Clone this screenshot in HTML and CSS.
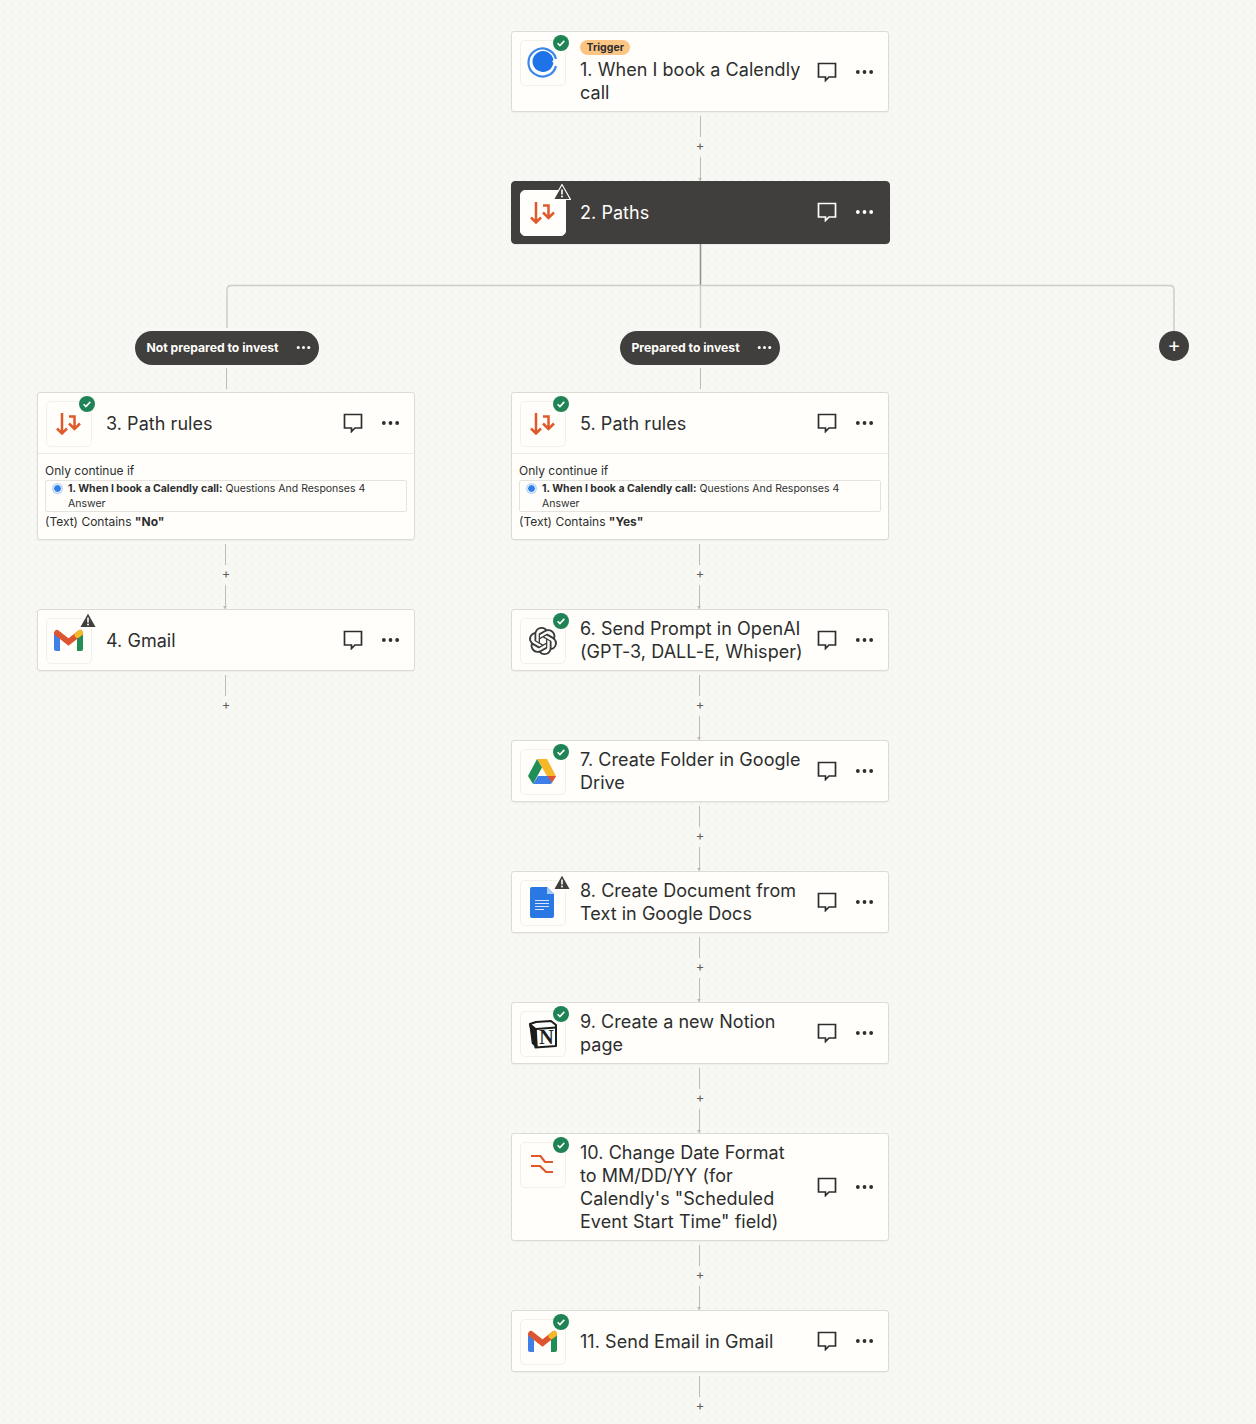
FILE: index.html
```html
<!DOCTYPE html>
<html lang="en">
<head>
    <meta charset="UTF-8">
    <title>Zap editor</title>
    <link rel="stylesheet" href="styles.css">
</head>
<body>

    <!-- Shared icons -->
    <svg class="defs" width="0" height="0">
        <symbol id="i-comment" viewBox="0 0 20 20">
            <path d="M1.500 1.500h17v13.500h-6.500l-3.500 3.500v-3.500h-7z" fill="none" stroke="currentColor" stroke-width="1.700"/>
        </symbol>
        <symbol id="i-more" viewBox="0 0 20 6">
            <circle cx="3" cy="3" r="2"/><circle cx="10" cy="3" r="2"/><circle cx="17" cy="3" r="2"/>
        </symbol>
        <symbol id="i-check" viewBox="0 0 16 16">
            <circle cx="8" cy="8" r="8" fill="#1f8355"/>
            <path d="M4.600 8.200l2.300 2.300 4.400-4.600" fill="none" stroke="#fff" stroke-width="1.600"/>
        </symbol>
        <symbol id="i-warn" viewBox="0 0 20 18">
            <path d="M10 1.500l8.500 15h-17z" fill="#403f3e" stroke="#fffefb" stroke-width="1.200" stroke-linejoin="round"/>
            <rect x="9.200" y="6.500" width="1.600" height="5" fill="#fff"/>
            <circle cx="10" cy="13.500" r="1" fill="#fff"/>
        </symbol>
        <symbol id="i-paths" viewBox="0 0 46 46">
            <path d="M16 12v20M11 27.500l5 5 5-5M23 15.500h5.500v12M23 22.500l5.500 5.500 5.500-5.500" fill="none" stroke="#e0592a" stroke-width="2.500"/>
        </symbol>
        <symbol id="i-gmail" viewBox="0 0 46 46">
            <path d="M8 16v15a2 2 0 0 0 2 2h4v-14z" fill="#3f7fe8"/>
            <path d="M31 33v-13l6-4v15a2 2 0 0 1-2 2z" fill="#1f8f55"/>
            <path d="M11 15l11.500 9 11.500-9" fill="none" stroke="#dc5530" stroke-width="6" stroke-linecap="round"/>
            <path d="M31.500 17l2.500-2" fill="none" stroke="#f6b92a" stroke-width="6" stroke-linecap="round"/>
        </symbol>
    </svg>

    <div class="canvas">

        <!-- Steps above the split -->
        <div class="trunk">
            <div class="card">
                <div class="card-head">
                    <div class="app-icon">
                        <svg viewBox="0 0 46 46">
                            <path d="M36 18.900A14 14 0 1 0 36 26.100" fill="none" stroke="#3b87ea" stroke-width="2.200"/>
                            <path d="M33.400 20.200A10.500 10.500 0 1 0 33.400 22.800L32 21.500z" fill="#1e73e8"/>
                        </svg>
                        <svg class="status"><use href="#i-check"/></svg>
                    </div>
                    <div class="card-text">
                        <span class="tag">Trigger</span>
                        <div class="card-title">1. When I book a Calendly call</div>
                    </div>
                    <div class="card-actions">
                        <svg class="act-comment"><use href="#i-comment"/></svg>
                        <svg class="act-more"><use href="#i-more"/></svg>
                    </div>
                </div>
            </div>

            <div class="link"><i class="line"></i><span class="plus">+</span><i class="line tip"></i></div>

            <div class="card card-dark">
                <div class="card-head">
                    <div class="app-icon">
                        <svg viewBox="0 0 46 46"><use href="#i-paths"/></svg>
                        <svg class="status warn"><use href="#i-warn"/></svg>
                    </div>
                    <div class="card-text">
                        <div class="card-title">2. Paths</div>
                    </div>
                    <div class="card-actions">
                        <svg class="act-comment"><use href="#i-comment"/></svg>
                        <svg class="act-more"><use href="#i-more"/></svg>
                    </div>
                </div>
            </div>
        </div>

        <!-- Split lines -->
        <div class="branches">
            <svg class="branch-lines" width="1256" height="90">
                <path d="M700.500 0v41" stroke="#8f8e8a" stroke-width="1.500" fill="none"/>
                <path d="M227 84v-38q0-4.500 4.500-4.500h938q4.500 0 4.500 4.500v41M700.500 41v43" stroke="#cfcdc7" stroke-width="1.500" fill="none"/>
            </svg>

            <!-- Left path -->
            <div class="branch">
                <div class="path-pill path-pill-left"><span>Not prepared to invest</span><svg class="pill-more"><use href="#i-more"/></svg></div>
                <i class="stub"></i>

                <div class="card">
                    <div class="card-head">
                        <div class="app-icon">
                            <svg viewBox="0 0 46 46"><use href="#i-paths"/></svg>
                            <svg class="status"><use href="#i-check"/></svg>
                        </div>
                        <div class="card-text"><div class="card-title">3. Path rules</div></div>
                        <div class="card-actions">
                            <svg class="act-comment"><use href="#i-comment"/></svg>
                            <svg class="act-more"><use href="#i-more"/></svg>
                        </div>
                    </div>
                    <div class="rule">
                        <div>Only continue if</div>
                        <div class="rule-field">
                            <i class="rule-dot"></i>
                            <div><b>1. When I book a Calendly call:</b> <span>Questions And Responses 4</span> <span>Answer</span></div>
                        </div>
                        <div>(Text) Contains <b>"No"</b></div>
                    </div>
                </div>

                <div class="link"><i class="line"></i><span class="plus">+</span><i class="line tip"></i></div>

                <div class="card">
                    <div class="card-head">
                        <div class="app-icon">
                            <svg viewBox="0 0 46 46"><use href="#i-gmail"/></svg>
                            <svg class="status warn"><use href="#i-warn"/></svg>
                        </div>
                        <div class="card-text"><div class="card-title">4. Gmail</div></div>
                        <div class="card-actions">
                            <svg class="act-comment"><use href="#i-comment"/></svg>
                            <svg class="act-more"><use href="#i-more"/></svg>
                        </div>
                    </div>
                </div>

                <div class="link"><i class="line"></i><span class="plus">+</span></div>
            </div>

            <!-- Middle path -->
            <div class="branch">
                <div class="path-pill"><span>Prepared to invest</span><svg class="pill-more"><use href="#i-more"/></svg></div>
                <i class="stub"></i>

                <div class="card">
                    <div class="card-head">
                        <div class="app-icon">
                            <svg viewBox="0 0 46 46"><use href="#i-paths"/></svg>
                            <svg class="status"><use href="#i-check"/></svg>
                        </div>
                        <div class="card-text"><div class="card-title">5. Path rules</div></div>
                        <div class="card-actions">
                            <svg class="act-comment"><use href="#i-comment"/></svg>
                            <svg class="act-more"><use href="#i-more"/></svg>
                        </div>
                    </div>
                    <div class="rule">
                        <div>Only continue if</div>
                        <div class="rule-field">
                            <i class="rule-dot"></i>
                            <div><b>1. When I book a Calendly call:</b> <span>Questions And Responses 4</span> <span>Answer</span></div>
                        </div>
                        <div>(Text) Contains <b>"Yes"</b></div>
                    </div>
                </div>

                <div class="link"><i class="line"></i><span class="plus">+</span><i class="line tip"></i></div>

                <div class="card">
                    <div class="card-head">
                        <div class="app-icon">
                            <svg viewBox="0 0 24 24" class="openai">
                                <path fill="#3a3b3b" d="M22.2819 9.8211a5.9847 5.9847 0 0 0-.5157-4.9108 6.0462 6.0462 0 0 0-6.5098-2.9A6.0651 6.0651 0 0 0 4.9807 4.1818a5.9847 5.9847 0 0 0-3.9977 2.9 6.0462 6.0462 0 0 0 .7427 7.0966 5.98 5.98 0 0 0 .511 4.9107 6.051 6.051 0 0 0 6.5146 2.9001A5.9847 5.9847 0 0 0 13.2599 24a6.0557 6.0557 0 0 0 5.7718-4.2058 5.9894 5.9894 0 0 0 3.9977-2.9001 6.0557 6.0557 0 0 0-.7475-7.0729zm-9.022 12.6081a4.4755 4.4755 0 0 1-2.8764-1.0408l.1419-.0804 4.7783-2.7582a.7948.7948 0 0 0 .3927-.6813v-6.7369l2.02 1.1686a.071.071 0 0 1 .038.052v5.5826a4.504 4.504 0 0 1-4.4945 4.4944zm-9.6607-4.1254a4.4708 4.4708 0 0 1-.5346-3.0137l.142.0852 4.783 2.7582a.7712.7712 0 0 0 .7806 0l5.8428-3.3685v2.3324a.0804.0804 0 0 1-.0332.0615L9.74 19.9502a4.4992 4.4992 0 0 1-6.1408-1.6464zM2.3408 7.8956a4.485 4.485 0 0 1 2.3655-1.9728V11.6a.7664.7664 0 0 0 .3879.6765l5.8144 3.3543-2.0201 1.1685a.0757.0757 0 0 1-.071 0l-4.8303-2.7865A4.504 4.504 0 0 1 2.3408 7.872zm16.5963 3.8558L13.1038 8.364 15.1192 7.2a.0757.0757 0 0 1 .071 0l4.8303 2.7913a4.4944 4.4944 0 0 1-.6765 8.1042v-5.6772a.79.79 0 0 0-.407-.667zm2.0107-3.0231l-.142-.0852-4.7735-2.7818a.7759.7759 0 0 0-.7854 0L9.409 9.2297V6.8974a.0662.0662 0 0 1 .0284-.0615l4.8303-2.7866a4.4992 4.4992 0 0 1 6.6802 4.66zM8.3065 12.863l-2.02-1.1638a.0804.0804 0 0 1-.038-.0567V6.0742a4.4992 4.4992 0 0 1 7.3757-3.4537l-.142.0805L8.704 5.459a.7948.7948 0 0 0-.3927.6813zm1.0976-2.3654l2.602-1.4998 2.6069 1.4998v2.9994l-2.5974 1.4997-2.6067-1.4997Z"/>
                            </svg>
                            <svg class="status"><use href="#i-check"/></svg>
                        </div>
                        <div class="card-text"><div class="card-title">6. Send Prompt in OpenAI (GPT-3, DALL-E, Whisper)</div></div>
                        <div class="card-actions">
                            <svg class="act-comment"><use href="#i-comment"/></svg>
                            <svg class="act-more"><use href="#i-more"/></svg>
                        </div>
                    </div>
                </div>

                <div class="link"><i class="line"></i><span class="plus">+</span><i class="line tip"></i></div>

                <div class="card">
                    <div class="card-head">
                        <div class="app-icon">
                            <svg viewBox="0 0 46 46">
                                <path d="M17 10h10l9 17h-9z" fill="#f6b829"/>
                                <path d="M17 10l5 8.500-9 16.500-5-8z" fill="#1f8f55"/>
                                <path d="M13 35l5-8h18l-5 8z" fill="#3f7fe8"/>
                                <path d="M27.500 27H36l-4 6.500z" fill="#e2512f"/>
                            </svg>
                            <svg class="status"><use href="#i-check"/></svg>
                        </div>
                        <div class="card-text"><div class="card-title">7. Create Folder in Google Drive</div></div>
                        <div class="card-actions">
                            <svg class="act-comment"><use href="#i-comment"/></svg>
                            <svg class="act-more"><use href="#i-more"/></svg>
                        </div>
                    </div>
                </div>

                <div class="link"><i class="line"></i><span class="plus">+</span><i class="line tip"></i></div>

                <div class="card">
                    <div class="card-head">
                        <div class="app-icon">
                            <svg viewBox="0 0 46 46">
                                <path d="M12 7h15l7 7v22a2 2 0 0 1-2 2H12a2 2 0 0 1-2-2V9a2 2 0 0 1 2-2z" fill="#2a78e4"/>
                                <path d="M27 7l7 7h-7z" fill="#a8c7fa"/>
                                <path d="M15 20.500h14M15 23.500h14M15 26.500h14M15 29.500h9" stroke="#d5e5fb" stroke-width="1"/>
                            </svg>
                            <svg class="status warn"><use href="#i-warn"/></svg>
                        </div>
                        <div class="card-text"><div class="card-title">8. Create Document from Text in Google Docs</div></div>
                        <div class="card-actions">
                            <svg class="act-comment"><use href="#i-comment"/></svg>
                            <svg class="act-more"><use href="#i-more"/></svg>
                        </div>
                    </div>
                </div>

                <div class="link"><i class="line"></i><span class="plus">+</span><i class="line tip"></i></div>

                <div class="card">
                    <div class="card-head">
                        <div class="app-icon">
                            <svg viewBox="0 0 46 46">
                                <path d="M10 13l5.500 23.500L36 35V14l-5-4-15 1z" fill="#fff" stroke="#1d1d1b" stroke-width="2" stroke-linejoin="round"/>
                                <path d="M10 13l6 5 1 18-4.500-3.500z" fill="#1d1d1b" stroke="#1d1d1b" stroke-width="1.500" stroke-linejoin="round"/>
                                <path d="M16 18l20-1.500" fill="none" stroke="#1d1d1b" stroke-width="2"/>
                                <text x="26.500" y="33" class="notion-n">N</text>
                            </svg>
                            <svg class="status"><use href="#i-check"/></svg>
                        </div>
                        <div class="card-text"><div class="card-title">9. Create a new Notion page</div></div>
                        <div class="card-actions">
                            <svg class="act-comment"><use href="#i-comment"/></svg>
                            <svg class="act-more"><use href="#i-more"/></svg>
                        </div>
                    </div>
                </div>

                <div class="link"><i class="line"></i><span class="plus">+</span><i class="line tip"></i></div>

                <div class="card">
                    <div class="card-head">
                        <div class="app-icon">
                            <svg viewBox="0 0 46 46">
                                <path d="M11 14h9.500l4.500 6h8M11 24h9l6 6h7" fill="none" stroke="#e0592a" stroke-width="2.200"/>
                            </svg>
                            <svg class="status"><use href="#i-check"/></svg>
                        </div>
                        <div class="card-text"><div class="card-title">10. Change Date Format to MM/DD/YY (for Calendly's "Scheduled Event Start Time" field)</div></div>
                        <div class="card-actions">
                            <svg class="act-comment"><use href="#i-comment"/></svg>
                            <svg class="act-more"><use href="#i-more"/></svg>
                        </div>
                    </div>
                </div>

                <div class="link"><i class="line"></i><span class="plus">+</span><i class="line tip"></i></div>

                <div class="card">
                    <div class="card-head">
                        <div class="app-icon">
                            <svg viewBox="0 0 46 46"><use href="#i-gmail"/></svg>
                            <svg class="status"><use href="#i-check"/></svg>
                        </div>
                        <div class="card-text"><div class="card-title">11. Send Email in Gmail</div></div>
                        <div class="card-actions">
                            <svg class="act-comment"><use href="#i-comment"/></svg>
                            <svg class="act-more"><use href="#i-more"/></svg>
                        </div>
                    </div>
                </div>

                <div class="link"><i class="line"></i><span class="plus">+</span></div>
            </div>

            <!-- New path -->
            <div class="branch">
                <div class="add-path">+</div>
            </div>
        </div>
    </div>
</body>
</html>
```

FILE: styles.css
```css
/* Page and dotted canvas */
body {
    margin: 0;
    font-family: Inter, "Liberation Sans", sans-serif;
    color: #2d2e2e;
    background-color: #f7f7f3;
    overflow: hidden;
}

.defs {
    position: absolute;
}

.canvas {
    width: 1256px;
    height: 1424px;
    box-sizing: border-box;
    padding: 31px 0 0 37px;
    overflow: hidden;
    display: grid;
    grid-template-columns: repeat(3, 378px);
    grid-auto-rows: min-content;
    column-gap: 96px;
    background-image: radial-gradient(#f2f1ed 1px, transparent 1px);
    background-size: 8px 8px;
}

.trunk {
    grid-column: 2;
}

.branches {
    grid-column: 1 / 4;
    position: relative;
    display: grid;
    grid-template-columns: repeat(3, 378px);
    column-gap: 96px;
}

.branch-lines {
    position: absolute;
    top: 0;
    left: -37px;
}

.branch {
    padding-top: 87px;
    display: flex;
    flex-direction: column;
    align-items: center;
}

/* Step cards */
.card {
    width: 378px;
    box-sizing: border-box;
    background-color: #fffefb;
    border: 1px solid #dcdbd5;
    border-radius: 3px;
    box-shadow: 0 1px 1px rgba(0, 0, 0, 0.04);
}

.card-head {
    display: flex;
    align-items: flex-start;
    padding: 7px 14px 7px 8px;
    min-height: 46px;
}

.app-icon {
    flex: none;
    position: relative;
    width: 46px;
    height: 46px;
    background-color: #fffefb;
    border: 1px solid #f1f0eb;
    border-radius: 5px;
    box-sizing: border-box;
    margin: 1px 14px -1px 0;
}

.app-icon > svg:first-child {
    display: block;
    width: 46px;
    height: 46px;
    margin: -1px;
}

.app-icon > svg.openai {
    width: 28px;
    height: 28px;
    margin: 8px;
}

.status {
    position: absolute;
    top: -6px;
    left: 32px;
    width: 16px;
    height: 16px;
}

.status.warn {
    top: -8px;
    left: 31px;
    width: 20px;
    height: 18px;
}

.notion-n {
    font-family: "Liberation Serif", serif;
    font-size: 20px;
    font-weight: bold;
    text-anchor: middle;
    fill: #1d1d1b;
}

.card-text {
    width: 224px;
    flex: none;
    align-self: center;
}

.card-title {
    font-size: 18px;
    line-height: 23px;
    letter-spacing: 0.05px;
    color: #2d2e2e;
}

.tag {
    display: block;
    width: fit-content;
    margin: 1px 0 3px;
    padding: 0 6.5px;
    height: 15px;
    line-height: 15px;
    font-size: 10.5px;
    font-weight: 700;
    background-color: #fdc583;
    border-radius: 8px;
}

.card-actions {
    margin-left: auto;
    align-self: center;
    display: flex;
    align-items: center;
    gap: 18px;
    color: #2d2e2e;
}

.act-comment {
    width: 20px;
    height: 20px;
}

.act-more {
    width: 19px;
    height: 6px;
    fill: currentColor;
}

/* Dark selected card */
.card-dark {
    width: 379px;
    height: 63px;
    background-color: #403f3e;
    border-color: #403f3e;
    border-radius: 4px;
}

.card-dark .card-head {
    padding-right: 15px;
}

.card-dark .card-title,
.card-dark .card-actions {
    color: #fffefb;
}

.card-dark .app-icon {
    border-color: #fffefb;
}

/* Rule block inside path cards */
.rule {
    border-top: 1px solid #ecebe6;
    padding: 8px 7px 9px 7px;
    font-size: 12px;
    line-height: 17px;
}

.rule-field {
    display: flex;
    gap: 6px;
    box-sizing: border-box;
    height: 32px;
    padding: 0 8px 0 7px;
    margin: 1px 0;
    border: 1px solid #e4e3de;
    border-radius: 2px;
    font-size: 10.5px;
    line-height: 15px;
}

.rule-dot {
    flex: none;
    width: 7px;
    height: 7px;
    margin-top: 3px;
    background-color: #2f7fe6;
    border: 1px solid #fff;
    border-radius: 50%;
    box-shadow: 0 0 0 1px #bcd4f5;
}

/* Connectors between cards */
.link {
    height: 69px;
    box-sizing: border-box;
    padding-top: 4px;
    display: flex;
    flex-direction: column;
    align-items: center;
}

.line {
    display: block;
    position: relative;
    width: 1px;
    height: 21px;
    background-color: #bdbbb5;
}

.line.tip {
    height: 24px;
}

.line.tip::after {
    content: "";
    position: absolute;
    left: -2px;
    bottom: 0;
    border-left: 2.5px solid transparent;
    border-right: 2.5px solid transparent;
    border-top: 3px solid #bdbbb5;
}

.plus {
    height: 20px;
    line-height: 16px;
    font-size: 13px;
    color: #5f5e5a;
}

/* Path labels */
.path-pill {
    display: flex;
    align-items: center;
    height: 34px;
    box-sizing: border-box;
    padding: 0 8px 1px 11px;
    gap: 17px;
    color: #fffefb;
    background-color: #403f3e;
    border-radius: 17px;
    font-size: 12.2px;
    font-weight: 700;
    white-space: nowrap;
}

.path-pill-left {
    margin-left: 2px;
}

.pill-more {
    width: 15px;
    height: 5px;
    fill: currentColor;
}

.stub {
    display: block;
    width: 1px;
    height: 21px;
    margin: 3px 0;
    background-color: #bdbbb5;
}

.add-path {
    width: 30px;
    height: 30px;
    line-height: 28px;
    text-align: center;
    font-size: 20px;
    color: #fffefb;
    background-color: #403f3e;
    border-radius: 50%;
}
```
